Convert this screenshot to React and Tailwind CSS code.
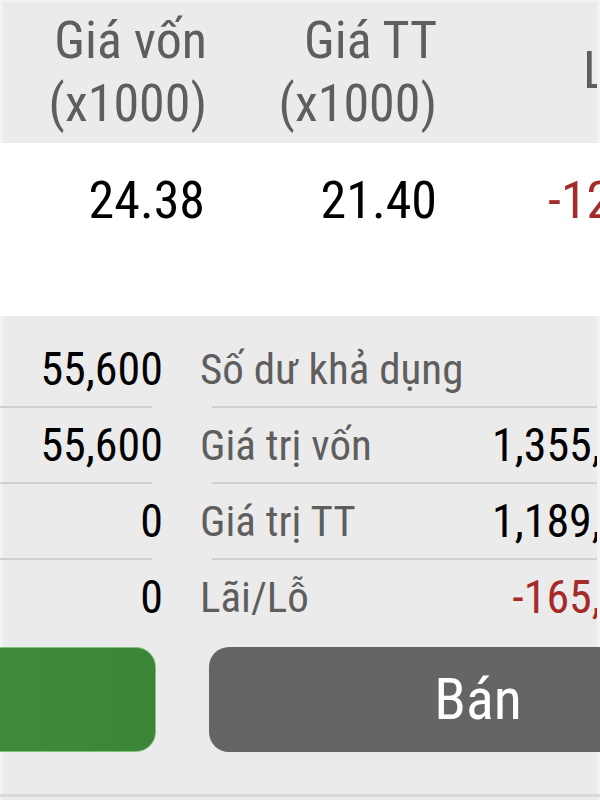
export default function App() {
  const rows = [
    { left: "55,600", label: "Số dư khả dụng", right: "", red: false },
    { left: "55,600", label: "Giá trị vốn", right: "1,355,600", red: false },
    { left: "0", label: "Giá trị TT", right: "1,189,200", red: false },
    { left: "0", label: "Lãi/Lỗ", right: "-165,400", red: true },
  ];
  return (
    <div className="w-[600px] h-[800px] overflow-hidden bg-[#ebebeb] flex flex-col font-['Roboto_Condensed','Roboto',sans-serif]">
      {/* header */}
      <div className="h-[143px] flex pt-[7px] text-[52px] leading-[63px] text-[#5e5e5e] shrink-0 border-x-[3px] border-t-[2px] border-[#f3f3f3]">
        <div className="w-[204px] text-right shrink-0">
          <div>Giá vốn</div>
          <div>(x1000)</div>
        </div>
        <div className="w-[230px] text-right shrink-0">
          <div>Giá TT</div>
          <div>(x1000)</div>
        </div>
        <div className="flex-1 flex items-center pl-[146px] pb-[12px] whitespace-nowrap overflow-hidden">
          Lãi/Lỗ
        </div>
      </div>
      {/* values */}
      <div className="h-[173px] bg-white flex pt-[26px] text-[52px] leading-[63px] text-black shrink-0">
        <div className="w-[205px] text-right shrink-0">24.38</div>
        <div className="w-[232px] text-right shrink-0">21.40</div>
        <div className="flex-1 pl-[111px] whitespace-nowrap overflow-hidden text-[#a52a2a]">-12.22</div>
      </div>
      {/* summary */}
      <div className="flex flex-col pt-[16px] shrink-0 border-x-[3px] border-[#f3f3f3]">
        {rows.map((r, i) => (
          <div key={i} className="flex flex-col h-[76px]">
            <div className="flex items-end h-[74px] pb-[9px] leading-[56px]">
              <div className="w-[160px] text-right text-black shrink-0 whitespace-nowrap text-[46px]">{r.left}</div>
              <div className="w-[290px] pl-[37px] text-[#5e5e5e] shrink-0 whitespace-nowrap text-[43px]">{r.label}</div>
              <div className="w-[144px] overflow-hidden shrink-0 text-[46px]">
                <div className={`w-[216px] text-right whitespace-nowrap ${r.red ? "text-[#a52a2a]" : "text-black"}`}>
                  {r.right}
                </div>
              </div>
            </div>
            {i < 3 && (
              <div className="flex h-[2px] -ml-[3px]">
                <div className="w-[152px] bg-[#d0d0d0]" />
                <div className="flex-1 ml-[60px] bg-[#d0d0d0]" />
              </div>
            )}
          </div>
        ))}
      </div>
      {/* buttons */}
      <div className="flex-1 flex flex-col border-x-[3px] border-[#f3f3f3]">
        <div className="flex gap-[53px] mt-[11px] -ml-[385px] shrink-0">
          <div className="w-[538px] h-[105px] rounded-[20px] bg-gradient-to-r from-[#4c9a42] to-[#3a8537] border border-[#7fc07a] shrink-0" />
          <div className="w-[538px] h-[105px] rounded-[20px] bg-[#656663] flex items-center justify-center text-white text-[58px] shrink-0">
            Bán
          </div>
        </div>
        <div className="mt-auto h-[3px] bg-[#dadada] -mx-[3px] mb-[3px]" />
      </div>
    </div>
  );
}
